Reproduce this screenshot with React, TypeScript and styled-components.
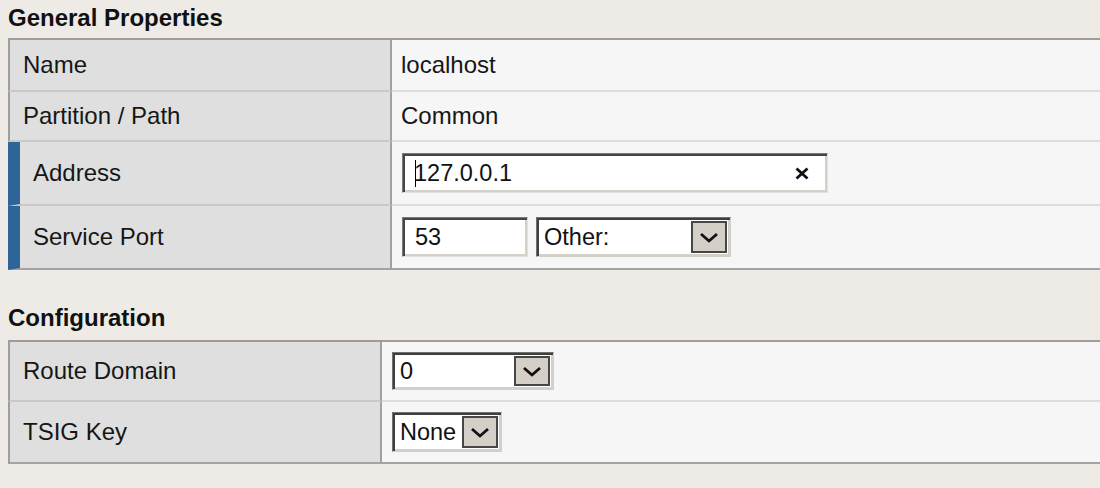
import React from "react";
import styled, { createGlobalStyle } from "styled-components";

const GlobalStyle = createGlobalStyle`
  html, body {
    margin: 0;
    padding: 0;
    background: #eeebe6;
    overflow: hidden;
  }
  body {
    font-family: "Liberation Sans", Arial, sans-serif;
    color: #111;
  }
`;

const Page = styled.div`
  box-sizing: border-box;
  width: 1100px;
  height: 488px;
  padding-left: 8px;
  overflow: hidden;
`;

const Section = styled.section<{ $gap: number }>`
  margin-top: ${(p) => p.$gap}px;
`;

const Heading = styled.h2<{ $pb: number }>`
  margin: 0;
  padding: 4px 0 ${(p) => p.$pb}px;
  font-size: 24px;
  line-height: 27px;
  font-weight: bold;
  color: #111;
`;

const Table = styled.div`
  border-top: 2px solid #a09c9c;
  margin-right: -40px;
`;

const Row = styled.div<{ $label: number; $h: number }>`
  display: grid;
  grid-template-columns: ${(p) => p.$label}px 1fr;
  height: ${(p) => p.$h}px;
`;

const LabelCell = styled.div<{ $required?: boolean }>`
  box-sizing: border-box;
  display: flex;
  align-items: center;
  background: #dfdfdf;
  border-left: ${(p) => (p.$required ? "12px solid #2e6598" : "2px solid #a09c9c")};
  border-right: 2px solid #a0a0a0;
  border-bottom: 2px solid #ccc9c4;
  padding-left: 13px;
  font-size: 24px;
  color: #161616;
  ${Row}:last-child & {
    border-bottom-color: #a3a3a3;
  }
`;

const ValueCell = styled.div`
  box-sizing: border-box;
  display: flex;
  align-items: center;
  gap: 8px;
  background: #f6f6f6;
  border-bottom: 2px solid #dddddd;
  padding-left: 10px;
  font-size: 24px;
  color: #161616;
  ${Row}:last-child & {
    border-bottom-color: #a3a3a3;
  }
`;

const PlainValue = styled.span`
  margin-left: -1px;
`;

const TextField = styled.div<{ $w: number }>`
  box-sizing: border-box;
  width: ${(p) => p.$w}px;
  height: 40px;
  display: flex;
  align-items: center;
  background: #fff;
  border: 1px solid;
  border-color: #7a7a7a #e2e0dc #e2e0dc #7a7a7a;
  box-shadow: inset 2px 2px 0 #454545, inset -2px -2px 0 #d4d0c8;
  padding: 0 18px 0 12px;
  font-size: 23.5px;
  color: #111;
`;

const Caret = styled.span`
  display: inline-block;
  width: 1px;
  height: 27px;
  background: #000;
  margin-right: -2px;
  flex: none;
`;

const FieldText = styled.span`
  flex: 1;
  white-space: nowrap;
`;

const Select = styled.div<{ $w: number; $h: number }>`
  box-sizing: border-box;
  width: ${(p) => p.$w}px;
  height: ${(p) => p.$h}px;
  display: flex;
  align-items: stretch;
  background: #fff;
  border: 1px solid;
  border-color: #707070 #d4d0c8 #d4d0c8 #707070;
  box-shadow: inset 2px 2px 0 #3f3f3f, inset -2px -2px 0 #d4d0c8;
  padding: 3px;
  font-size: 23.5px;
  color: #111;
`;

const SelectText = styled.span`
  flex: 1;
  display: flex;
  align-items: center;
  padding-left: 4px;
  white-space: nowrap;
`;

const SelectButton = styled.span`
  box-sizing: border-box;
  width: 36px;
  flex: none;
  display: flex;
  align-items: center;
  justify-content: center;
  background: #d4d0c8;
  border: 2px solid #464646;
`;

const Chevron = () => (
  <svg width="20" height="11" viewBox="0 0 20 11">
    <polyline points="2,2 10,9 18,2" fill="none" stroke="#111" strokeWidth="2.8" />
  </svg>
);

const ClearIcon = () => (
  <svg width="14" height="13" viewBox="0 0 14 13">
    <line x1="1.5" y1="1.5" x2="12.5" y2="11.5" stroke="#111" strokeWidth="2.8" />
    <line x1="12.5" y1="1.5" x2="1.5" y2="11.5" stroke="#111" strokeWidth="2.8" />
  </svg>
);

const DropDown = ({ w, h, value }: { w: number; h: number; value: string }) => (
  <Select $w={w} $h={h}>
    <SelectText>{value}</SelectText>
    <SelectButton>
      <Chevron />
    </SelectButton>
  </Select>
);

export default function App() {
  return (
    <>
      <GlobalStyle />
      <Page>
        <Section $gap={0}>
          <Heading $pb={7}>General Properties</Heading>
          <Table>
            <Row $label={384} $h={52}>
              <LabelCell>Name</LabelCell>
              <ValueCell>
                <PlainValue>localhost</PlainValue>
              </ValueCell>
            </Row>
            <Row $label={384} $h={50}>
              <LabelCell>Partition / Path</LabelCell>
              <ValueCell>
                <PlainValue>Common</PlainValue>
              </ValueCell>
            </Row>
            <Row $label={384} $h={64}>
              <LabelCell $required>Address</LabelCell>
              <ValueCell>
                <TextField $w={426}>
                  <Caret />
                  <FieldText>127.0.0.1</FieldText>
                  <ClearIcon />
                </TextField>
              </ValueCell>
            </Row>
            <Row $label={384} $h={64}>
              <LabelCell $required>Service Port</LabelCell>
              <ValueCell>
                <TextField $w={126}>
                  <FieldText>53</FieldText>
                </TextField>
                <DropDown w={195} h={40} value="Other:" />
              </ValueCell>
            </Row>
          </Table>
        </Section>
        <Section $gap={30}>
          <Heading $pb={9}>Configuration</Heading>
          <Table>
            <Row $label={374} $h={60}>
              <LabelCell>Route Domain</LabelCell>
              <ValueCell>
                <DropDown w={162} h={38} value="0" />
              </ValueCell>
            </Row>
            <Row $label={374} $h={62}>
              <LabelCell>TSIG Key</LabelCell>
              <ValueCell>
                <DropDown w={110} h={40} value="None" />
              </ValueCell>
            </Row>
          </Table>
        </Section>
      </Page>
    </>
  );
}
